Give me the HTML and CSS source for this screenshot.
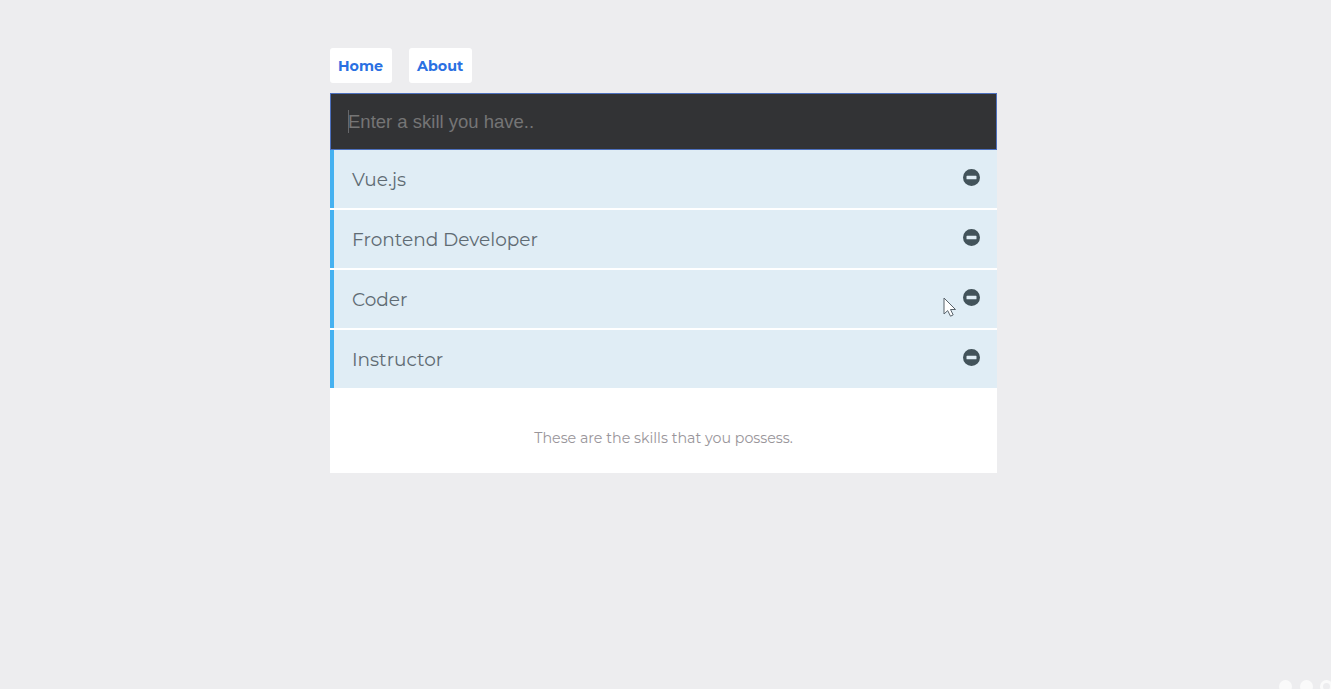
FILE: index.html
```html
<!DOCTYPE html>
<html lang="en">
<head>
<meta charset="utf-8">
<title>Skills</title>
<link rel="stylesheet" href="styles.css">
</head>
<body>
<svg class="defs" aria-hidden="true"><symbol id="minus" viewBox="0 0 16 16"><path fill-rule="evenodd" d="M8 0a8 8 0 1 0 0 16A8 8 0 0 0 8 0zM3.8 6.4h8.4q.5 0 .5.5v2.2q0 .5-.5.5H3.8q-.5 0-.5-.5V6.9q0-.5.5-.5z"/></symbol></svg>
<div class="page">
  <nav class="nav">
    <a class="nav-link">Home</a>
    <a class="nav-link about-link">About</a>
  </nav>
  <main class="holder">
    <div class="field"><span class="caret"></span><span class="placeholder">Enter a skill you have..</span></div>
    <ul class="skills">
      <li class="skill"><span>Vue.js</span><svg class="remove"><use href="#minus"/></svg></li>
      <li class="skill"><span>Frontend Developer</span><svg class="remove"><use href="#minus"/></svg></li>
      <li class="skill"><span>Coder</span><svg class="remove"><use href="#minus"/></svg></li>
      <li class="skill"><span>Instructor</span><svg class="remove"><use href="#minus"/></svg></li>
    </ul>
    <p class="note">These are the skills that you possess.</p>
  </main>
</div>
<svg class="cursor" viewBox="0 0 14 21"><path d="M1 1v16l3.7-3.4 2.8 5.6 2.7-1.3-2.7-5.4H12.5z" fill="#fff" stroke="#59636b" stroke-width="1"/></svg>
<svg class="dots" viewBox="0 0 53 10"><g fill="#fafafa"><circle cx="7.5" cy="7.5" r="6.5"/><circle cx="28.5" cy="7.5" r="6.5"/></g><circle cx="48.5" cy="7.5" r="5" fill="none" stroke="#fafafa" stroke-width="3"/></svg>
</body>
</html>
```
FILE: styles.css
```css
* { box-sizing: border-box; }
body {
  margin: 0;
  height: 689px;
  overflow: hidden;
  background: #ededef;
  font-family: Montserrat, Inter, "Open Sans", sans-serif;
}
.defs { display: none; }
.page { width: 667px; margin-left: 330px; padding-top: 48px; }
.nav { display: flex; gap: 17px; height: 35px; margin-bottom: 10px; }
.nav-link {
  display: flex;
  align-items: center;
  width: 62px;
  padding: 0 0 0 8px;
  border-radius: 3px;
  background: #fff;
  color: #2a70e2;
  font-size: 14.3px;
  font-weight: 700;
  white-space: nowrap;
}
.about-link { width: 63px; }
.holder { background: #fff; height: 380px; }
.field {
  display: flex;
  align-items: center;
  height: 57px;
  padding: 0 0 0 17px;
  border: 1px solid #4d70bd;
  background: #323335;
  color: #757575;
  font: 18.5px "Liberation Sans", Arial, sans-serif;
}
.caret { width: 1px; height: 23px; margin-right: -1px; background: #66676a; }
.placeholder { white-space: nowrap; }
.skills {
  display: grid;
  grid-template-rows: 58px 58px 58px 58px;
  gap: 2px;
  margin: 0;
  padding: 0;
  list-style: none;
}
.skill {
  display: flex;
  justify-content: space-between;
  align-items: center;
  padding: 0 17px 0 18px;
  border-left: 4px solid #45b1f0;
  background: #e0edf5;
  color: #5f6b73;
  font-size: 18.5px;
}
.remove { width: 17px; height: 17px; margin-bottom: 4px; fill: #43535a; }
.note {
  display: flex;
  justify-content: center;
  margin: 0;
  padding-top: 41px;
  color: #99959a;
  font-size: 14.25px;
  line-height: 18px;
  white-space: nowrap;
}
.cursor { position: absolute; left: 943px; top: 297px; width: 14px; height: 21px; }
.dots { position: absolute; right: 0; bottom: 0; width: 53px; height: 10px; }
```
